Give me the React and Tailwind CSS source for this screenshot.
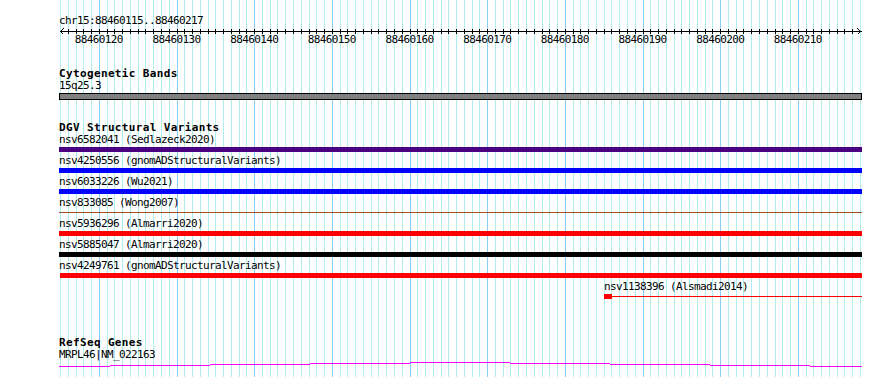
const START = 88460115;
const SPAN = 103;
const bx = (i) => 60 + (i * 800) / SPAN;

const variants = [
  { label: 'nsv6582041 (Sedlazeck2020)', color: 'bg-[#4b0082]' },
  { label: 'nsv4250556 (gnomADStructuralVariants)', color: 'bg-[#0000ff]' },
  { label: 'nsv6033226 (Wu2021)', color: 'bg-[#0000ff]' },
  { label: 'nsv833085 (Wong2007)', thin: true },
  { label: 'nsv5936296 (Almarri2020)', color: 'bg-[#ff0000]' },
  { label: 'nsv5885047 (Almarri2020)', color: 'bg-black' },
  { label: 'nsv4249761 (gnomADStructuralVariants)', color: 'bg-[#ff0000]', inset: true },
];

// gene line steps: [x1, x2, y]
const geneSteps = [
  [59, 110, 366], [110, 210, 365], [210, 310, 364], [310, 410, 363], [410, 510, 362],
  [510, 610, 363], [610, 710, 364], [710, 810, 365], [810, 862, 366],
];

function Grid() {
  const lines = [];
  for (let i = 0; i <= SPAN; i++) {
    const x = Math.round(bx(i)) + 0.5;
    const dark = i % 10 === 5;
    lines.push(
      <line key={i} x1={x} x2={x} y1={0} y2={377} stroke={dark ? '#87cefa' : '#afeeee'} strokeWidth={1} />
    );
  }
  return (
    <svg className="absolute inset-0" width="890" height="377" shapeRendering="crispEdges">
      {lines}
    </svg>
  );
}

function Ruler() {
  const ticks = [];
  for (let i = 1; i < SPAN; i++) {
    const x = Math.round(bx(i)) + 0.5;
    ticks.push(<line key={i} x1={x} x2={x} y1={2} y2={7} stroke="black" />);
  }
  return (
    <svg className="block" width="890" height="7" shapeRendering="crispEdges">
      <line x1={60} x2={862} y1={4.5} y2={4.5} stroke="black" />
      {ticks}
      <polyline points="63.5,1.5 60.5,4.5 63.5,7.5" fill="none" stroke="black" />
      <polyline points="857.5,1.5 860.5,4.5 857.5,7.5" fill="none" stroke="black" />
    </svg>
  );
}

function TickLabels() {
  const labels = [];
  for (let i = 5; i < SPAN; i += 10) {
    labels.push(
      <span
        key={i}
        className="absolute top-0 -translate-x-1/2 whitespace-nowrap"
        style={{ left: bx(i) }}
      >
        {START + i}
      </span>
    );
  }
  return <div className="relative h-[12px]">{labels}</div>;
}

const Title = ({ children, className = '' }) => (
  <div className={`h-[12px] pl-[59px] font-bold tracking-[0.36px] whitespace-nowrap ${className}`}>{children}</div>
);

const Label = ({ children, className = 'pl-[59px]' }) => (
  <div className={`h-[12px] whitespace-nowrap ${className}`}>{children}</div>
);

export default function App() {
  return (
    <div className="relative w-[890px] h-[377px] overflow-hidden bg-white text-black font-['DejaVu_Sans_Mono','Liberation_Mono',monospace] text-[11px] leading-[12px] tracking-[-0.62px]">
      <Grid />
      <div className="relative pt-[15px]">
        {/* Ruler */}
        <Label>chr15:88460115..88460217</Label>
        <Ruler />
        <TickLabels />

        {/* Cytogenetic Bands */}
        <Title className="mt-[22px]">Cytogenetic Bands</Title>
        <Label>15q25.3</Label>
        <div className="mt-[1px] ml-[59px] w-[803px] h-[7px] border border-black bg-[#808080]" />

        {/* DGV Structural Variants */}
        <Title className="mt-[22px]">DGV Structural Variants</Title>
        {variants.map((v) => (
          <div key={v.label} className="mb-[3px]">
            <Label>{v.label}</Label>
            {v.thin ? (
              <div className="mt-[1px] h-[5px] ml-[59px] w-[803px] flex items-center">
                <div className="h-[1px] w-full bg-[#a0522d]" />
              </div>
            ) : (
              <div
                className={`mt-[1px] h-[5px] ${v.inset ? 'ml-[60px] w-[802px]' : 'ml-[59px] w-[803px]'} ${v.color}`}
              />
            )}
          </div>
        ))}
        <div>
          <Label className="pl-[604px]">nsv1138396 (Alsmadi2014)</Label>
          <div className="mt-[1px] h-[5px] ml-[604px] w-[258px] flex items-center">
            <div className="h-[5px] w-[8px] bg-[#ff0000]" />
            <div className="h-[1px] flex-1 bg-[#ff0000]" />
          </div>
        </div>

        {/* RefSeq Genes */}
        <Title className="mt-[38px]">RefSeq Genes</Title>
        <Label>MRPL46|NM_022163</Label>
        <svg className="block" width="890" height="6" shapeRendering="crispEdges">
          {geneSteps.map(([x1, x2, y]) => (
            <rect key={x1} x={x1} y={y - 361} width={x2 - x1} height={1} fill="#ff00ff" />
          ))}
        </svg>
      </div>
    </div>
  );
}
